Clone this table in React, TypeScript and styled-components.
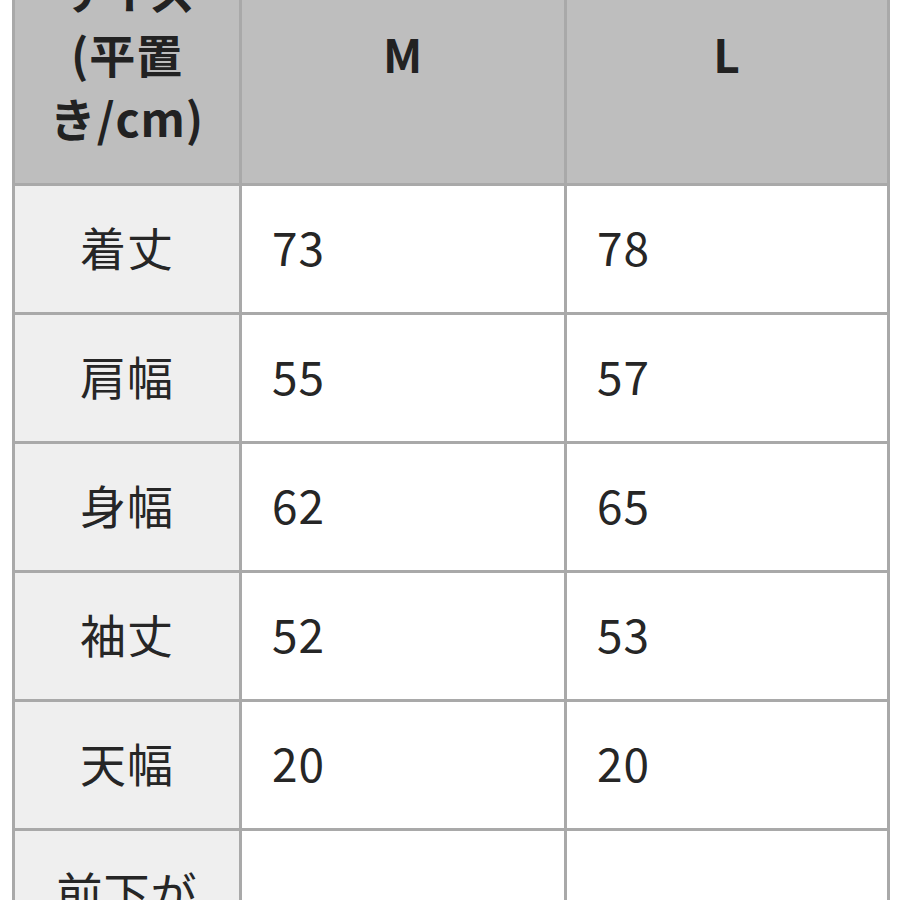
import styled, { createGlobalStyle } from 'styled-components';

const GlobalStyle = createGlobalStyle`
    html, body {
        margin: 0;
        padding: 0;
        background: #ffffff;
        overflow: hidden;
    }
    body {
        font-family: 'Noto Sans CJK JP', 'Noto Sans', sans-serif;
        color: #262626;
    }
`;

const Page = styled.div`
    width: 900px;
    height: 900px;
    overflow: hidden;
    padding-left: 12px;
    box-sizing: border-box;
`;

const SizeTable = styled.table`
    width: 875px;
    margin-top: -72px;
    border-collapse: collapse;
    table-layout: fixed;
    font-size: 46px;
    line-height: 64px;
    letter-spacing: 0.02em;
`;

const HeaderCell = styled.th<{ $label?: boolean }>`
    height: 244px;
    padding: 0 ${({ $label }) => ($label ? '30px' : '0')} 8px;
    background: #bebebe;
    border: 3px solid #a9a9a9;
    font-weight: 700;
    text-align: center;
    vertical-align: middle;
    color: #222222;
`;

const LabelCell = styled.td`
    padding: 28px 30px 34px;
    background: #efefef;
    border: 3px solid #a9a9a9;
    text-align: center;
    vertical-align: middle;
`;

const ValueCell = styled.td`
    padding: 28px 30px 34px;
    background: #ffffff;
    border: 3px solid #a9a9a9;
    text-align: left;
    vertical-align: middle;
`;

const rows: { label: string; m: string; l: string }[] = [
    { label: '着丈', m: '73', l: '78' },
    { label: '肩幅', m: '55', l: '57' },
    { label: '身幅', m: '62', l: '65' },
    { label: '袖丈', m: '52', l: '53' },
    { label: '天幅', m: '20', l: '20' },
];

const App = () => {
    return (
        <Page>
            <GlobalStyle />
            <SizeTable>
                <colgroup>
                    <col style={{ width: 227 }} />
                    <col style={{ width: 325 }} />
                    <col style={{ width: 323 }} />
                </colgroup>
                <thead>
                    <tr>
                        <HeaderCell $label>
                            サイズ
                            <br />
                            (平置
                            <br />
                            き/cm)
                        </HeaderCell>
                        <HeaderCell>M</HeaderCell>
                        <HeaderCell>L</HeaderCell>
                    </tr>
                </thead>
                <tbody>
                    {rows.map((row) => (
                        <tr key={row.label}>
                            <LabelCell>{row.label}</LabelCell>
                            <ValueCell>{row.m}</ValueCell>
                            <ValueCell>{row.l}</ValueCell>
                        </tr>
                    ))}
                    <tr>
                        <LabelCell>
                            前下が
                            <br />
                            り
                        </LabelCell>
                        <ValueCell />
                        <ValueCell />
                    </tr>
                </tbody>
            </SizeTable>
        </Page>
    );
};

export default App;
